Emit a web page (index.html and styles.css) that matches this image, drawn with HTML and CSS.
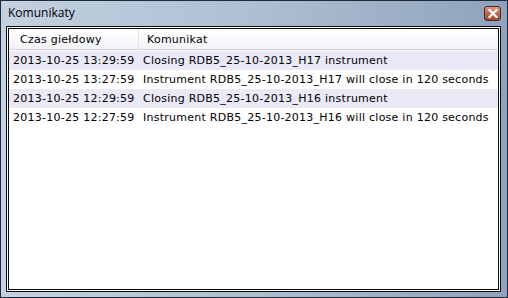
FILE: index.html
```html
<!DOCTYPE html>
<html>
<head>
<meta charset="utf-8">
<link rel="stylesheet" href="styles.css">
</head>
<body>
<div class="window">
  <div class="titlebar">
    <span class="title">Komunikaty</span>
    <span class="close"><svg width="10" height="9" viewBox="0 0 10 9"><path d="M1.5 1 L8.5 8 M8.5 1 L1.5 8" stroke="#fff" stroke-width="2.2" stroke-linecap="square"/></svg></span>
  </div>
  <div class="client">
    <div class="list">
      <div class="header">
        <div class="hcol c1">Czas giełdowy</div>
        <div class="hcol c2">Komunikat</div>
      </div>
      <div class="row alt"><div class="c1">2013-10-25 13:29:59</div><div class="c2">Closing RDB5_25-10-2013_H17 instrument</div></div>
      <div class="row"><div class="c1">2013-10-25 13:27:59</div><div class="c2">Instrument RDB5_25-10-2013_H17 will close in 120 seconds</div></div>
      <div class="row alt"><div class="c1">2013-10-25 12:29:59</div><div class="c2">Closing RDB5_25-10-2013_H16 instrument</div></div>
      <div class="row"><div class="c1">2013-10-25 12:27:59</div><div class="c2">Instrument RDB5_25-10-2013_H16 will close in 120 seconds</div></div>
    </div>
  </div>
</div>
</body>
</html>
```
FILE: styles.css
```css
html, body { margin: 0; padding: 0; }
body { width: 508px; height: 298px; overflow: hidden; font-family: "DejaVu Sans", Verdana, sans-serif; }
.window {
  box-sizing: border-box;
  width: 508px; height: 298px;
  border: 1px solid #1c2a3a;
  background: linear-gradient(to right, #c3d1e1 0%, #aebfd2 50%, #8ea3bb 100%);
  display: flex; flex-direction: column;
}
.titlebar {
  height: 25px;
  display: flex; align-items: center; justify-content: space-between;
  padding: 0 6px 0 7px;
}
.title { font-family: "Open Sans", "Noto Sans", sans-serif; font-size: 12px; color: #000; margin-top: -3px; }
.close {
  width: 17px; height: 15px; margin-top: 0;
  box-sizing: border-box;
  border: 1px solid #4a2a24;
  border-radius: 3px;
  background: linear-gradient(#dc9a88, #c0634c 50%, #a04a36);
  display: flex; align-items: center; justify-content: center;
}
.client {
  flex: 1;
  margin: 0 6px 5px 5px;
  border: 1px solid #0c0c0c;
  background: #fff;
  padding: 1px;
  display: flex;
}
.list {
  flex: 1;
  border: 1px solid #0c0c0c;
  background: #fff;
  font-size: 11px;
  letter-spacing: 0.25px;
  color: #000;
}
.header {
  display: flex;
  height: 20px;
  background: linear-gradient(#ffffff, #f1f3f6);
  border-bottom: 1px solid #d5d5d5;
  margin-bottom: 1px;
}
.hcol { display: flex; align-items: center; }
.header .c1 { width: 130px; box-sizing: border-box; padding-left: 11px; border-right: 1px solid #e0e3e8; }
.header .c2 { padding-left: 8px; }
.row { display: flex; height: 19px; align-items: center; }
.row.alt { background: #e9e9f8; }
.row .c1 { width: 130px; box-sizing: border-box; padding-left: 4px; }
.row .c2 { padding-left: 4px; white-space: nowrap; }
```
